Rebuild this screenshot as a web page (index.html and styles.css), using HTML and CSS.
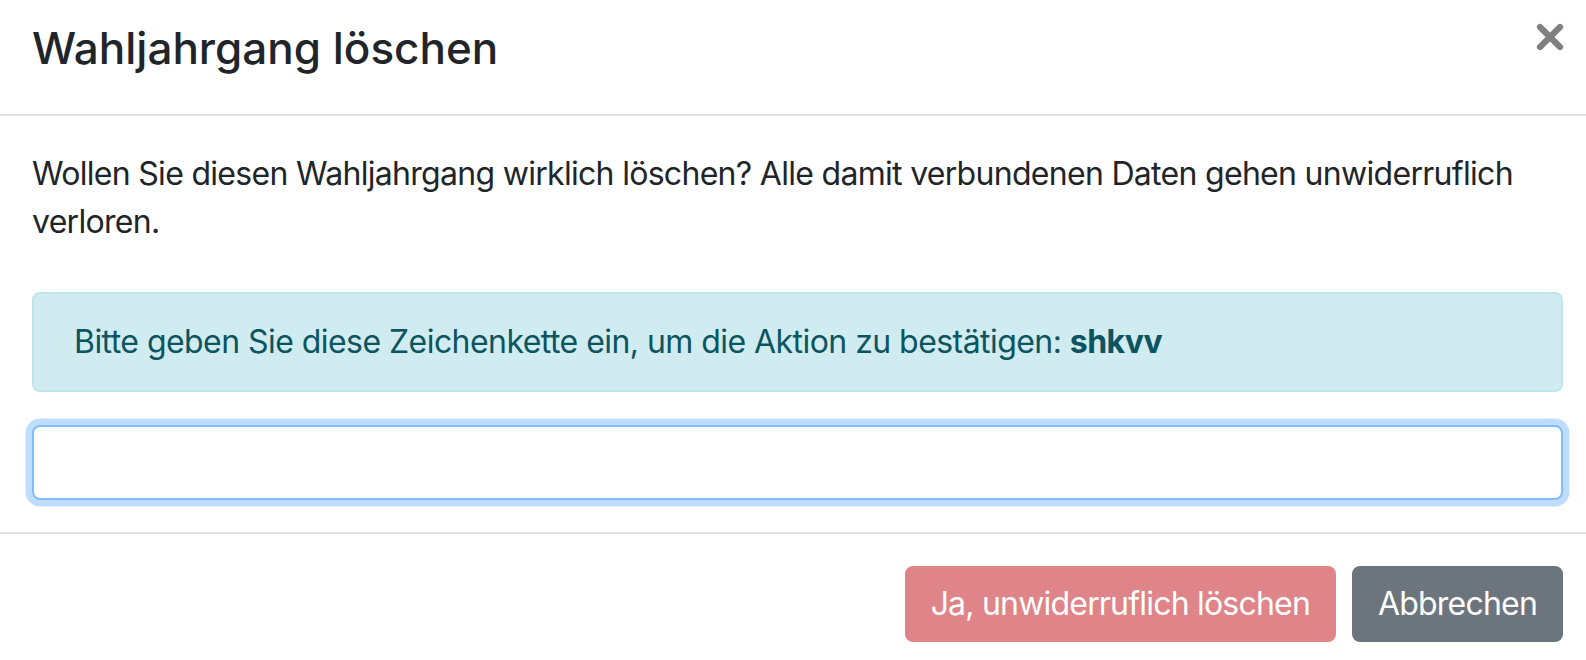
FILE: index.html
```html
<!DOCTYPE html>
<html lang="de">
<head>
<meta charset="utf-8">
<title>Wahljahrgang löschen</title>
<link rel="stylesheet" href="styles.css">
</head>
<body>
<div class="modal">
  <div class="modal-header">
    <h5 class="modal-title">Wahljahrgang löschen</h5>
    <button class="close" type="button" aria-label="Close">
      <svg width="28" height="28" viewBox="0 0 28 28"><path d="M4 4 L24 24 M24 4 L4 24" stroke="#808080" stroke-width="6.2" stroke-linecap="round"/></svg>
    </button>
  </div>
  <div class="modal-body">
    <p class="lead-text">Wollen Sie diesen Wahljahrgang wirklich löschen? Alle damit verbundenen Daten gehen unwiderruflich verloren.</p>
    <div class="alert">Bitte geben Sie diese Zeichenkette ein, um die Aktion zu bestätigen: <strong>shkvv</strong></div>
    <input class="form-control" type="text">
  </div>
  <div class="modal-footer">
    <button class="btn btn-danger" type="button">Ja, unwiderruflich löschen</button>
    <button class="btn btn-secondary" type="button">Abbrechen</button>
  </div>
</div>
</body>
</html>
```
FILE: styles.css
```css
html, body {
  margin: 0;
  padding: 0;
  background: #fff;
  overflow: hidden;
}
body {
  font-family: Inter, "Noto Sans", "Liberation Sans", sans-serif;
  font-size: 32px;
  line-height: 48px;
  letter-spacing: -0.4px;
  color: #212529;
}
.modal {
  width: 1595px;
  display: flex;
  flex-direction: column;
}
.modal-header {
  display: flex;
  align-items: flex-start;
  padding: 24px 32px 42px;
  border-bottom: 2px solid #dee2e6;
}
.modal-title {
  margin: 0;
  font-size: 44px;
  line-height: 48px;
  font-weight: 500;
  letter-spacing: 0;
  color: #212529;
}
.close {
  margin: -1px -1px 0 auto;
  padding: 0;
  border: 0;
  background: transparent;
  display: flex;
}
.modal-body {
  padding: 34px 32px 32px;
}
.lead-text {
  margin: 0 0 46px;
  letter-spacing: -0.7px;
}
.alert {
  background: #d1ecf1;
  border: 2px solid #bee5eb;
  color: #0c5460;
  border-radius: 8px;
  padding: 24px 40px;
  margin-bottom: 33px;
  letter-spacing: -0.55px;
}
.alert strong {
  font-weight: 700;
}
.form-control {
  display: block;
  box-sizing: border-box;
  width: 100%;
  height: 75px;
  margin: 0;
  padding: 12px 24px;
  font: inherit;
  border: 2px solid #80bdff;
  border-radius: 8px;
  box-shadow: 0 0 0 6.4px rgba(0, 123, 255, 0.25);
  outline: none;
  background: #fff;
}
.modal-footer {
  display: flex;
  justify-content: flex-end;
  align-items: center;
  padding: 24px;
  border-top: 2px solid #dee2e6;
}
.btn {
  margin: 8px;
  font: inherit;
  line-height: 48px;
  letter-spacing: -0.8px;
  padding: 12px 24px;
  border: 2px solid transparent;
  border-radius: 8px;
  color: #fff;
}
.btn-danger {
  background: #df8489;
  border-color: #df8489;
}
.btn-secondary {
  background: #6c757d;
  border-color: #6c757d;
}
```
